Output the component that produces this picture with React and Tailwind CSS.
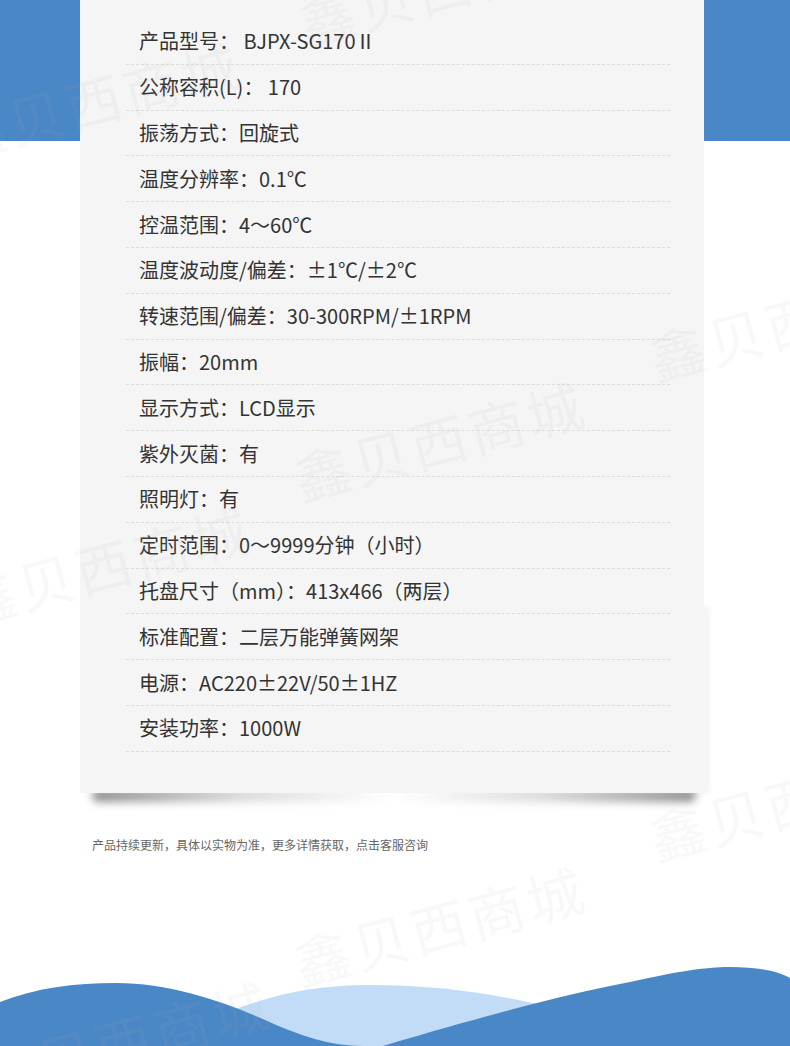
import React from 'react';

const specs = [
  '产品型号： BJPX-SG170Ⅱ',
  '公称容积(L)： 170',
  '振荡方式：回旋式',
  '温度分辨率：0.1℃',
  '控温范围：4～60℃',
  '温度波动度/偏差：±1℃/±2℃',
  '转速范围/偏差：30-300RPM/±1RPM',
  '振幅：20mm',
  '显示方式：LCD显示',
  '紫外灭菌：有',
  '照明灯：有',
  '定时范围：0～9999分钟（小时）',
  '托盘尺寸（mm）：413x466（两层）',
  '标准配置：二层万能弹簧网架',
  '电源：AC220±22V/50±1HZ',
  '安装功率：1000W',
];

// watermark tiles, their place on the page is the content
const marks = [
  { left: 300, top: -5 },
  { left: -50, top: 110 },
  { left: 295, top: 450 },
  { left: -40, top: 575 },
  { left: 650, top: 330 },
  { left: 650, top: 810 },
  { left: 295, top: 935 },
  { left: -20, top: 1050 },
];

const Watermark = ({ left, top }) => (
  <span
    className="pointer-events-none absolute z-30 whitespace-nowrap text-[56px] leading-none tracking-[4px] text-[rgba(180,180,180,0.09)] -rotate-[15deg] origin-left"
    style={{ left, top }}
  >
    鑫贝西商城
  </span>
);

const Waves = () => (
  <svg viewBox="0 0 790 86" width="790" height="86" className="block">
    <path d="M170 86 C 220 48, 290 25, 368 25 C 440 25, 500 34, 570 52 L 570 86 Z" fill="#c2dcf7" />
    <path d="M0 42 C 35 28, 75 23, 116 23 C 170 23, 225 42, 265 60 C 300 76, 330 86, 363 86 L 0 86 Z" fill="#4a87c6" />
    <path d="M383 86 C 450 66, 555 36, 630 22 C 675 12, 705 7, 730 7 C 758 7, 778 11, 790 18 L 790 86 Z" fill="#4a87c6" />
  </svg>
);

export default function App() {
  return (
    <div
      className="relative w-[790px] h-[1046px] overflow-hidden bg-white flex flex-col"
      style={{ fontFamily: '"Noto Sans CJK SC", "Noto Sans", sans-serif' }}
    >
      <div className="absolute top-0 left-0 right-0 h-[141px] bg-[#4a87c6]" />

      <div className="relative mx-[80px] w-[624px]">
        {/* lifted-corner shadow under the card */}
        <div className="absolute left-[12px] top-full -mt-[4px] w-[300px] h-[13px] bg-gradient-to-r from-black/45 via-black/15 to-transparent blur-[4px] rounded-l-full" />
        <div className="absolute right-[8px] top-full -mt-[4px] w-[300px] h-[13px] bg-gradient-to-l from-black/45 via-black/15 to-transparent blur-[4px] rounded-r-full" />
        <div className="absolute top-[607px] bottom-0 right-[-3px] w-[20px] bg-[#f5f5f5] shadow-[2px_0_5px_rgba(0,0,0,0.06)]" />
        <div className="relative bg-[#f5f5f5] pt-[19px] pb-[41px] pl-[46px] pr-[34px]">
          {specs.map((s) => (
            <div
              key={s}
              className="h-[45.8px] flex items-center border-b border-dashed border-[#dcdcdc] pl-[13px] text-[20px] text-[#333]"
            >
              {s}
            </div>
          ))}
        </div>
      </div>

      <p className="mt-[44px] ml-[92px] text-[12px] leading-[16px] text-[#666]">
        产品持续更新，具体以实物为准，更多详情获取，点击客服咨询
      </p>

      <div className="mt-auto">
        <Waves />
      </div>

      {marks.map((m, i) => (
        <Watermark key={i} {...m} />
      ))}
    </div>
  );
}
